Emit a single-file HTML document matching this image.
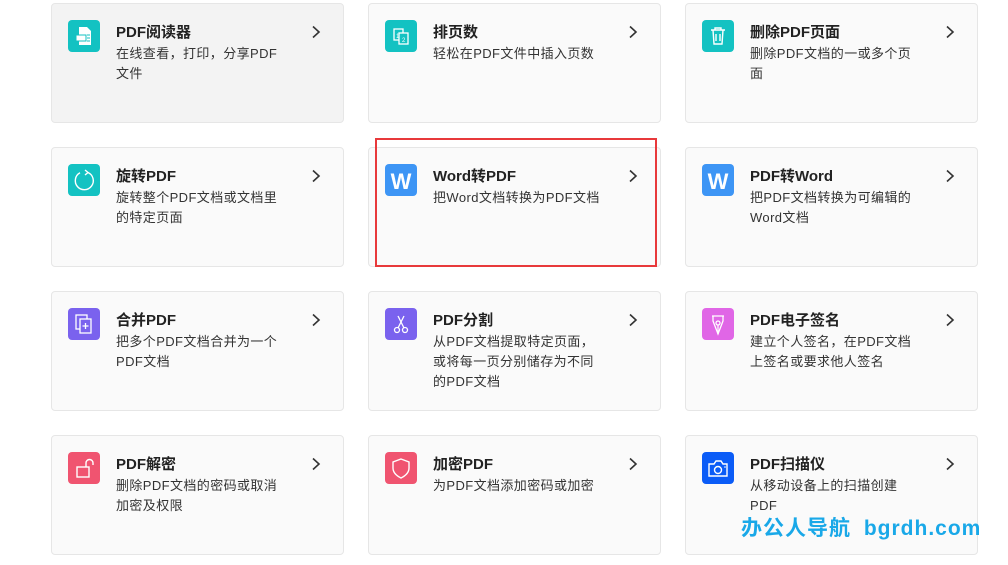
<!DOCTYPE html>
<html><head><meta charset="utf-8"><style>
body{margin:0;width:1008px;height:565px;background:#fff;position:relative;overflow:hidden;font-family:"Liberation Sans","Noto Sans CJK SC",sans-serif;}
.c{position:absolute;width:293px;height:120px;background:#fafafa;border:1px solid #e6e6e6;border-radius:4px;box-sizing:border-box;}
.ic{position:absolute;left:16px;top:16px;width:32px;height:32px;border-radius:4px;}
.ic svg{width:32px;height:32px;display:block}
.t{position:absolute;left:64px;top:18px;font-size:15px;font-weight:bold;color:#222;line-height:22px;}
.d{position:absolute;left:64px;top:40px;white-space:nowrap;font-size:13px;color:#333;line-height:20px;letter-spacing:0.4px;}
.a{position:absolute;left:259px;top:21px;}
.teal{background:#13c2c2}.blue{background:#3d95f5}.pur{background:#7a62ee}.pink{background:#e066e6}.red{background:#f05470}.dblue{background:#0b5cf7}
</style></head><body>
<svg width="0" height="0" style="position:absolute"><defs><symbol id="ar" viewBox="0 0 10 14"><path d="M2 1.5l6 5.5-6 5.5" fill="none" stroke="#333" stroke-width="1.6"/></symbol></defs></svg>

<div class="c" style="left:51px;top:3px;background:#f3f3f3"><div class="ic teal"><svg viewBox="0 0 32 32"><path d="M11 7h8l4 4v14H11z" fill="#fff"/><rect x="8" y="15" width="10" height="6" fill="#fff" stroke="#13c2c2"/><path d="M19 15h3M19 18h3M19 21h3" stroke="#13c2c2"/></svg></div><div class="t">PDF阅读器</div><div class="d">在线查看，打印，分享PDF<br>文件</div><svg class="a" width="10" height="14"><use href="#ar"/></svg></div>
<div class="c" style="left:368px;top:3px"><div class="ic teal"><svg viewBox="0 0 32 32"><rect x="9" y="9" width="9" height="11" fill="none" stroke="#fff" stroke-width="1.3"/><rect x="14" y="13" width="9" height="11" fill="#13c2c2" stroke="#fff" stroke-width="1.3"/><text x="11" y="18" font-size="6" fill="#fff">1</text><text x="17" y="22" font-size="6" fill="#fff">2</text></svg></div><div class="t">排页数</div><div class="d">轻松在PDF文件中插入页数</div><svg class="a" width="10" height="14"><use href="#ar"/></svg></div>
<div class="c" style="left:685px;top:3px"><div class="ic teal"><svg viewBox="0 0 32 32"><path d="M9 10h14M13 10V8h6v2M11 10l1 14h8l1-14M14 14v7M18 14v7" fill="none" stroke="#fff" stroke-width="1.4"/></svg></div><div class="t">删除PDF页面</div><div class="d">删除PDF文档的一或多个页<br>面</div><svg class="a" width="10" height="14"><use href="#ar"/></svg></div>

<div class="c" style="left:51px;top:147px"><div class="ic teal"><svg viewBox="0 0 32 32"><path d="M20 8.5A9 9 0 1 1 12 8.8" fill="none" stroke="#fff" stroke-width="1.4"/><path d="M17 6l3 2.5-3 2.5" fill="none" stroke="#fff" stroke-width="1.4"/></svg></div><div class="t">旋转PDF</div><div class="d">旋转整个PDF文档或文档里<br>的特定页面</div><svg class="a" width="10" height="14"><use href="#ar"/></svg></div>
<div class="c" style="left:368px;top:147px"><div class="ic blue"><svg viewBox="0 0 32 32"><text x="16" y="25" text-anchor="middle" font-size="22" font-weight="bold" fill="#fff" font-family="Liberation Sans">W</text></svg></div><div class="t">Word转PDF</div><div class="d">把Word文档转换为PDF文档</div><svg class="a" width="10" height="14"><use href="#ar"/></svg></div>
<div class="c" style="left:685px;top:147px"><div class="ic blue"><svg viewBox="0 0 32 32"><text x="16" y="25" text-anchor="middle" font-size="22" font-weight="bold" fill="#fff" font-family="Liberation Sans">W</text></svg></div><div class="t">PDF转Word</div><div class="d">把PDF文档转换为可编辑的<br>Word文档</div><svg class="a" width="10" height="14"><use href="#ar"/></svg></div>

<div class="c" style="left:51px;top:291px"><div class="ic pur"><svg viewBox="0 0 32 32"><rect x="8" y="7" width="11" height="14" fill="none" stroke="#fff" stroke-width="1.3"/><rect x="12" y="11" width="11" height="14" fill="#7a62ee" stroke="#fff" stroke-width="1.3"/><path d="M17.5 15v6M14.5 18h6" stroke="#fff" stroke-width="1.3"/></svg></div><div class="t">合并PDF</div><div class="d">把多个PDF文档合并为一个<br>PDF文档</div><svg class="a" width="10" height="14"><use href="#ar"/></svg></div>
<div class="c" style="left:368px;top:291px"><div class="ic pur"><svg viewBox="0 0 32 32"><circle cx="12" cy="22" r="2.5" fill="none" stroke="#fff" stroke-width="1.3"/><circle cx="20" cy="22" r="2.5" fill="none" stroke="#fff" stroke-width="1.3"/><path d="M13 20L19 8M19 20L13 8" stroke="#fff" stroke-width="1.3"/></svg></div><div class="t">PDF分割</div><div class="d">从PDF文档提取特定页面，<br>或将每一页分别储存为不同<br>的PDF文档</div><svg class="a" width="10" height="14"><use href="#ar"/></svg></div>
<div class="c" style="left:685px;top:291px"><div class="ic pink"><svg viewBox="0 0 32 32"><path d="M10 8h12M11 8v5l5 13 5-13V8" fill="none" stroke="#fff" stroke-width="1.3"/><circle cx="16" cy="15" r="2" fill="none" stroke="#fff" stroke-width="1.3"/><path d="M16 17v9" stroke="#fff" stroke-width="1.2"/></svg></div><div class="t">PDF电子签名</div><div class="d">建立个人签名，在PDF文档<br>上签名或要求他人签名</div><svg class="a" width="10" height="14"><use href="#ar"/></svg></div>

<div class="c" style="left:51px;top:435px"><div class="ic red"><svg viewBox="0 0 32 32"><rect x="9" y="15" width="12" height="10" fill="none" stroke="#fff" stroke-width="1.4"/><path d="M18 15v-4a3.5 3.5 0 0 1 7 0v2" fill="none" stroke="#fff" stroke-width="1.4"/></svg></div><div class="t">PDF解密</div><div class="d">删除PDF文档的密码或取消<br>加密及权限</div><svg class="a" width="10" height="14"><use href="#ar"/></svg></div>
<div class="c" style="left:368px;top:435px"><div class="ic red"><svg viewBox="0 0 32 32"><path d="M16 7l8 3v6c0 5-4 8-8 10-4-2-8-5-8-10v-6z" fill="none" stroke="#fff" stroke-width="1.4"/></svg></div><div class="t">加密PDF</div><div class="d">为PDF文档添加密码或加密</div><svg class="a" width="10" height="14"><use href="#ar"/></svg></div>
<div class="c" style="left:685px;top:435px"><div class="ic dblue"><svg viewBox="0 0 32 32"><path d="M7 12h5l2-3h5l2 3h4v12H7z" fill="none" stroke="#fff" stroke-width="1.4"/><circle cx="16" cy="18" r="3.5" fill="none" stroke="#fff" stroke-width="1.4"/><circle cx="23" cy="15" r="0.8" fill="#fff"/></svg></div><div class="t">PDF扫描仪</div><div class="d">从移动设备上的扫描创建<br>PDF</div><svg class="a" width="10" height="14"><use href="#ar"/></svg></div>

<div style="position:absolute;left:375px;top:138px;width:282px;height:129px;border:2px solid #e8393b;box-sizing:border-box"></div>
<div style="position:absolute;left:741px;top:512px;font-size:21px;font-weight:bold;color:#19a8e8;letter-spacing:1px;white-space:nowrap">办公人导航 <span style="margin-left:6px">bgrdh.com</span></div>
</body></html>
